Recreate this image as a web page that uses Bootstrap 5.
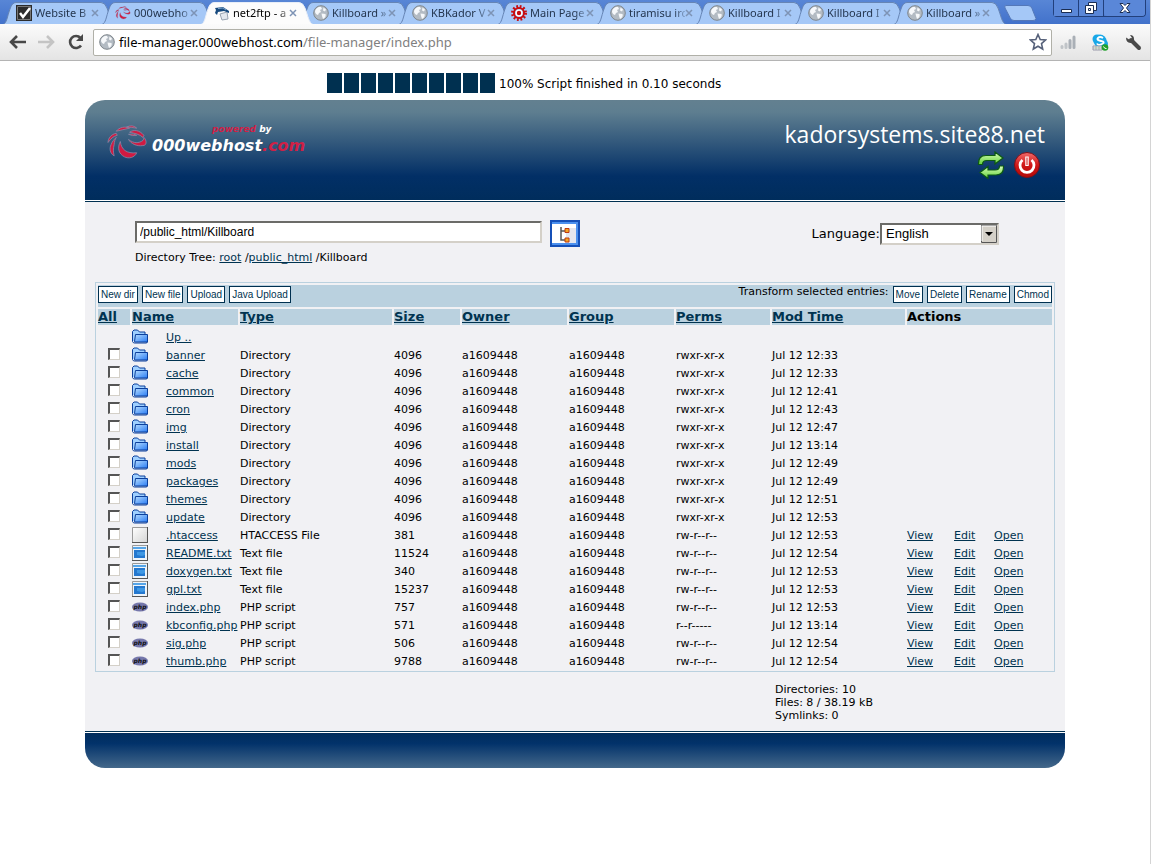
<!DOCTYPE html>
<html lang="en">
<head>
<meta charset="utf-8">
<title>net2ftp - a web based FTP client</title>
<meta name="viewport" content="width=device-width, initial-scale=1">
<link href="https://cdn.jsdelivr.net/npm/bootstrap@5.3.0/dist/css/bootstrap.min.css" rel="stylesheet">
<style>
:root { --navy: #003050; --sky: #bad1df; }
body { font-family: "DejaVu Sans", Verdana, sans-serif; font-size: 11px; line-height: 14px; color: #000; background: #fff; }
.window-frame { min-height: 100vh; margin-right: 1px; border-right: 1px solid #d4d4d4; }
a { color: #003350; text-decoration: underline; }

/* browser window */
.tab-strip { height: 24px; background: linear-gradient(#5886d6, #4272cb); padding-left: 3px; overflow: hidden; }
.tab-list { min-width: 0; }
.tab-item { position: relative; flex: 0 1 112px; min-width: 0; height: 22px; margin-top: 2px; margin-right: -13px; padding: 0 16px 0 13px; font: 11px/22px "Noto Sans", sans-serif; color: #24364f; background: none; border: 0; text-align: left; }
.tab-item.current { z-index: 2; color: #000; }
.tab-item > svg, .tab-item > span { position: relative; flex: none; }
.tab-item > .shape { position: absolute; inset: 0; width: 100%; height: 100%; fill: #a5c8f7; stroke: #6685b5; }
.tab-item.current > .shape { fill: #fcfcfc; stroke: #e8eef8; }
.tab-item .tab-icon { margin-right: 3px; }
.tab-item .caption { flex: 1 1 0; min-width: 0; overflow: hidden; white-space: nowrap; -webkit-mask-image: linear-gradient(90deg, #000 80%, #0004); mask-image: linear-gradient(90deg, #000 80%, #0004); }
.new-tab { width: 34px; height: 16px; margin: 5px 0 0 10px; padding: 0; border: 0; background: none; }
.win-buttons { margin-right: 4px; height: 17px; border: 1px solid #22407c; border-top: 0; border-radius: 0 0 4px 4px; }
.win-buttons button { width: 25px; padding: 0; border: 0; border-right: 1px solid #22407c; background: #5a87d8; line-height: 0; }
.win-buttons button:last-child { width: 41px; border-right: 0; border-radius: 0 0 3px 3px; }
.tool-bar { height: 37px; background: linear-gradient(#fbfbfb, #e4e4e4); border-bottom: 1px solid #b4b4b4; padding: 0 8px 0 9px; }
.tool-bar button { padding: 0; border: 0; background: none; line-height: 0; }
.address { height: 27px; border: 1px solid #b0b0a8; border-radius: 2px; background: #fff; font: 13px/25px "Noto Sans", sans-serif; color: #808080; padding: 0 4px 0 5px; }
.address b { font-weight: 400; color: #000; }

/* progress */
.progress-line { height: 39px; padding: 12px 0 0 327px; font-size: 12px; line-height: 22px; }
.progress-line i { width: 15px; height: 20px; background: var(--navy); }
.blocks { gap: 2px; }

/* panel */
.panel { max-width: 980px; margin: 0 auto; }
.panel-head { height: 100px; border-radius: 20px 20px 0 0; background: linear-gradient(#638090 0, #5e7e90 12%, #022f66 76%, #002d5c 100%); padding: 21px 20px 0 22px; }
.logo-text { font: italic bold 16px/16px "DejaVu Sans", sans-serif; color: #fff; }
.logo-text small { display: block; font-size: 9px; line-height: 9px; padding-left: 60px; }
.logo-text em { color: #d02045; }
.site-name { font: 23px/26px "Open Sans", sans-serif; color: #fff; }
.panel-main { background: #f1f1f4; border-top: 1px solid var(--navy); border-bottom: 1px solid var(--navy); margin: 1px 0; padding: 18px 10px 9px; }
.panel-foot { height: 35px; border-radius: 0 0 20px 20px; background: linear-gradient(#002d5c, #02326a 30%, #44688a); }
.sunk { border: 2px solid; border-color: #6b6b68 #d4d0c8 #d4d0c8 #6b6b68; border-radius: 0; background: #fff; font: 12px/18px "Liberation Sans", Arial, sans-serif; color: #000; }
.path-row { padding: 0 56px 0 40px; }
.path-box { width: 407px; height: 22px; padding: 0 3px; }
.lang-label { font-size: 13px; line-height: 18px; }
.lang-box { width: 119px; height: 22px; padding: 0 0 0 4px; font-size: 13px; appearance: none; background: #fff; }
.lang-wrap { position: relative; }
.lang-wrap svg { position: absolute; right: 2px; top: 2px; pointer-events: none; }
.crumbs { padding: 4px 40px 0; height: 35px; }

.file-table { width: 100%; table-layout: fixed; border-collapse: separate; border-spacing: 2px; border: 1px solid var(--sky); }
.file-table td, .file-table th { padding: 0; height: 16px; line-height: 16px; white-space: nowrap; vertical-align: top; }
.file-table th { background: var(--sky); font-size: 13px; }
.file-table tbody td:nth-child(n+3) { padding-top: 2px; line-height: 14px; vertical-align: bottom; }
.file-table .up-row td { height: 18px; padding-top: 2px; }
.file-table .commands { height: 22px; background: var(--sky); line-height: 14px; }
.file-table svg { display: block; }
.php-icon { margin-top: 3px; }
.c-all { width: 32px; } .c-icon { width: 32px; } .c-name { width: 72px; } .c-type { width: 152px; } .c-size { width: 66px; }
.c-own { width: 105px; } .c-perm { width: 94px; } .c-time { width: 133px; } .c-view { width: 45px; } .c-edit { width: 38px; }
.cmd { height: 17px; margin: 1px 0 0; padding: 0 2px; border: 1px solid var(--navy); border-radius: 0; background: #fff; color: #003350; font: 10px/15px "Liberation Sans", Arial, sans-serif; white-space: nowrap; }
.tick { display: block; appearance: none; width: 12px; height: 12px; margin: 1px 0 0 10px; background: #fff; border: solid; border-width: 2px 1px 1px 2px; border-color: #555 #d4d0c8 #d4d0c8 #555; }
.totals { padding: 11px 0 0 680px; line-height: 13px; }
</style>
</head>
<body>
<svg width="0" height="0" class="position-absolute" aria-hidden="true">
  <defs>
    <linearGradient id="blue" x1="0" y1="0" x2="1" y2="1"><stop offset="0" stop-color="#b4dcff"/><stop offset="1" stop-color="#2a7cf4"/></linearGradient>
    <linearGradient id="paper" x1="0" y1="0" x2="1" y2="1"><stop offset="0" stop-color="#fff"/><stop offset="1" stop-color="#d4d4d4"/></linearGradient>
    <linearGradient id="red" x1="0" y1="0" x2="0" y2="1"><stop offset="0" stop-color="#f26a6a"/><stop offset=".5" stop-color="#d01818"/><stop offset="1" stop-color="#b40808"/></linearGradient>
    <linearGradient id="leaf" x1="0" y1="0" x2="0" y2="1"><stop offset="0" stop-color="#d8ffb8"/><stop offset="1" stop-color="#63cf3a"/></linearGradient>
  </defs>
  <symbol id="i-shape" viewBox="0 0 112 22" preserveAspectRatio="none"><path d="M0 22.500C4 21 4 15 7 7Q9 .5 13 .5H98Q102 .5 104 6C107 14 108 21 112 22.500"/></symbol>
  <symbol id="i-x" viewBox="0 0 8 8"><path d="M1 1l6 6M7 1L1 7" stroke="#7d93b5" stroke-width="1.500"/></symbol>
  <symbol id="i-globe" viewBox="0 0 16 16"><circle cx="8" cy="8" r="7.300" fill="#b3bbc3" stroke="#7f868c"/><path d="M3 4q3-3 5-2l1 2-2 1 1 2-2 1-1 2q-3-1-3-4zM8.500 8.500l4 .5q1 3-2.500 5l-1-3zM10.500 2.500l2.500 2-1 2-2-1z" fill="#f6f8fa"/></symbol>
  <symbol id="i-check" viewBox="0 0 16 16"><path d="M0 0h16v16H0z" fill="#2c2c2c"/><path d="M1.500 1.500h13v13h-13z" fill="none" stroke="#777"/><path d="M4 8l3 4 7-9" fill="none" stroke="#fff" stroke-width="2.500"/></symbol>
  <symbol id="i-swirl" viewBox="0 0 40 34"><g fill="#d01a42" stroke="#8c8fae" stroke-width=".7"><path d="M21 14c5 4 10 4 14 1q1-1 1-3c3 3 3 8-1 8-6 1-12-2-14-6z"/><path d="M13 16c1 8 6 12 16 11-2 5-8 6-12 4-6-3-7-9-4-15z"/><path d="M22 7c4-3 10-2 14 3l-1 2c-3-3-8-4-13-5z"/><path d="M4 19c-2 4-1 9 3 11-1-4-1-7 0-11 0-3 1-5 2-7-2 2-4 4-5 7z"/><path d="M9 8C4 9 1 13 1 17c3-4 5-6 9-7z"/><path d="M9 6c3-4 9-5 13-3-4 1-9 2-13 3z"/><path d="M19 2q6-3 10 1-5-1-10-1z"/><path d="M21 9q5-1 8 1-4 1-8-1z"/></g></symbol>
  <symbol id="i-ftp" viewBox="0 0 16 16"><path d="M6 9l7-2 1 7-6 1z" stroke="#9aa5b2" fill="#e3e8ee"/><path d="M1 3l8-1 6 4v2l-5-2-6 1-1 3-2-2 1-3z" fill="#174a7e"/><path d="M4 3.500l5-.5 3 2" stroke="#7fa6cc" fill="none"/></symbol>
  <symbol id="i-gear" viewBox="0 0 16 16"><circle cx="8" cy="8" r="6.500" fill="none" stroke="#c80d10" stroke-width="3" stroke-dasharray="1.700 1.700"/><circle cx="8" cy="8" r="5" fill="none" stroke="#c80d10" stroke-width="2"/><circle cx="8" cy="8" r="3.500" fill="#fff"/><circle cx="8" cy="8" r="2.200" fill="#c80d10"/></symbol>
  <symbol id="i-folder" viewBox="0 0 17 15"><path d="M.5 12.500V2.500l1.500-1.500h3.500l2 2h5.500v3" fill="#9fd0ff" stroke="#0b3f9c"/><path d="M2.500 12.500l1-7h12v7.500h-13z" fill="url(#blue)" stroke="#0b3f9c"/><path d="M.5 12.500q.5 1.500 2 1.500H14q1.500 0 1.500-1.500" fill="none" stroke="#0b3f9c"/></symbol>
  <symbol id="i-file" viewBox="0 0 16 16"><path d="M.5.5h15v15H.5z" fill="url(#paper)" stroke="#9a9a9a"/><path d="M0 15.500h16M15.500 0v16" stroke="#555"/></symbol>
  <symbol id="i-text" viewBox="0 0 16 16"><path d="M.5.5h15v15H.5z" fill="#eef4fa" stroke="#999"/><path d="M0 15.500h16M15.500 0v16" stroke="#555"/><path d="M1 2h13v2H1z" fill="#56a5e8"/><path d="M2 5h11v8H2z" fill="#2478cf"/><path d="M5 7h8v3l-3 1-5-1z" fill="#3f98e4"/></symbol>
  <symbol id="i-php" viewBox="0 0 16 10"><ellipse cx="8" cy="5" rx="8" ry="4.600" fill="#7577ab"/></symbol>
</svg>

<div class="window-frame">
  <header>
    <div class="tab-strip d-flex align-items-start">
      <div class="tab-list d-flex flex-grow-1" id="tabs"></div>
      <div class="win-buttons d-flex flex-shrink-0">
        <button type="button" aria-label="Minimize"><svg width="14" height="14"><path d="M2.500 8.500h10v3h-10z" fill="#fff" stroke="#1b2d52"/></svg></button>
        <button type="button" aria-label="Restore"><svg width="14" height="14" fill="#fff" stroke="#1b2d52"><path d="M4.500 1.500h8v8h-8z"/><path d="M1.500 4.500h8v8h-8z"/><path d="M4.500 7.500h2v2h-2z"/></svg></button>
        <button type="button" aria-label="Close window"><svg width="14" height="14"><path d="M2 2.500h3l2 2 2-2h3L8.500 7l3.500 4.500H9l-2-2-2 2H2L5.500 7z" fill="#fff" stroke="#1b2d52"/></svg></button>
      </div>
    </div>
    <div class="tool-bar d-flex align-items-center">
      <button type="button" aria-label="Back"><svg width="17" height="16" fill="none" stroke="#484848" stroke-width="2.600"><path d="M8 2L2 8l6 6M2 8h15"/></svg></button>
      <button type="button" aria-label="Forward" class="ms-2 ps-1"><svg width="17" height="16" fill="none" stroke="#c4c4c4" stroke-width="2.600"><path d="M9 2l6 6-6 6M15 8H0"/></svg></button>
      <button type="button" aria-label="Reload" class="ms-2 ps-1"><svg width="18" height="16"><path d="M14 11.500A6 6 0 1 1 13.500 4" fill="none" stroke="#484848" stroke-width="2.600"/><path d="M16 0v7H9z" fill="#484848"/></svg></button>
      <div class="address d-flex align-items-center flex-grow-1 ms-2">
        <svg width="16" height="16" class="me-1"><use href="#i-globe"/></svg>
        <span class="flex-grow-1"><b>file-manager.000webhost.com</b>/file-manager/index.php</span>
        <svg width="18" height="18" viewBox="0 0 18 18"><path d="M9 1.500l2.200 5 5.300.5-4 3.600 1.200 5.400L9 13.200 4.300 16l1.200-5.400-4-3.600 5.300-.5z" fill="#fff" stroke="#56617a" stroke-width="1.600"/></svg>
      </div>
      <svg width="16" height="16" class="ms-2 me-3" viewBox="0 0 16 16" stroke-linecap="round" stroke-width="3"><path d="M2 12.500v1M6 10v3.500" stroke="#c0c4c8"/><path d="M10 6.500v7M14 3v10.500" stroke="#a9afb6"/></svg>
      <svg width="17" height="17" class="me-3" viewBox="0 0 17 17"><circle cx="5" cy="5" r="4.500" fill="#18a8e8"/><circle cx="11" cy="10" r="5" fill="#18a8e8"/><circle cx="8" cy="7" r="6.500" fill="#18a8e8"/><path d="M11 4Q8 2 6 4T9 7 10 10 5 9.500" fill="none" stroke="#fff" stroke-width="1.800"/><path d="M1 12h9v4H1z" fill="#eef0ee" stroke="#99a"/><path d="M4 12v4M7 12v4M1 14h9" stroke="#9a9" stroke-width=".7"/><circle cx="13" cy="13.500" r="3.300" fill="#21a12c"/><path d="M11.500 12.500q1 2.500 3 2" stroke="#fff" fill="none"/></svg>
      <svg width="17" height="17" viewBox="0 0 17 17"><path d="M6 6l8 8" stroke="#4a4a4a" stroke-width="4" stroke-linecap="round"/><path d="M1 3.500q0 5 4.500 5.500T9 5Q9 1 5 1l2 3-2 2z" fill="#4a4a4a"/></svg>
    </div>
  </header>

  <main>
    <div class="progress-line d-flex">
      <div class="blocks d-flex me-1" role="progressbar" aria-label="Script progress" aria-valuenow="100"><i></i><i></i><i></i><i></i><i></i><i></i><i></i><i></i><i></i><i></i></div>
      <span>100% Script finished in 0.10 seconds</span>
    </div>
    <div class="panel">
      <div class="panel-head d-flex justify-content-between">
        <a href="#" class="d-flex align-items-start text-decoration-none">
          <svg width="41" height="35" class="mt-1"><use href="#i-swirl"/></svg>
          <span class="logo-text ms-1 pt-1"><small><em>powered</em> by</small><span class="d-block pt-1">000webhost<em>.com</em></span></span>
        </a>
        <div class="text-end">
          <div class="site-name">kadorsystems.site88.net</div>
          <div class="d-flex justify-content-end mt-1 pe-1 gap-2">
            <a href="#" aria-label="Refresh"><svg width="28" height="28" viewBox="0 0 28 28" fill="url(#leaf)" stroke="#0d5a12" stroke-width="1.200"><path d="M1.500 13.500Q1 4.500 9 4.500h9V1l8 6-8 6V9.500h-8q-4.500 0-4.500 4z"/><path d="M26.500 15Q27 24 19 24h-8v3.500l-8-6 8-6V19h7q4.500 0 4.500-4z"/></svg></a>
            <a href="#" aria-label="Log out"><svg width="28" height="28" viewBox="0 0 28 28"><circle cx="14" cy="14" r="12.500" fill="url(#red)" stroke="#7c0f18"/><path d="M9.500 9a7 7 0 1 0 9 0" fill="none" stroke="#fff" stroke-width="2.800"/><path d="M14 5.500v9.500" stroke="#fff" stroke-width="3.500"/><path d="M14 6.500v7.500" stroke="#d01818"/></svg></a>
          </div>
        </div>
      </div>
      <div class="panel-main">
        <div class="path-row d-flex align-items-center">
          <input type="text" class="sunk path-box mb-1" aria-label="Directory" value="/public_html/Killboard">
          <button type="button" class="border-0 bg-transparent p-0 ms-2" aria-label="Browse"><svg width="30" height="27" class="d-block"><path d="M1 1h28v25H1z" fill="#fff" stroke="#1550b8" stroke-width="2"/><path d="M2 2h26v2H2zM2 23h26v2H2zM26 2h2v22h-2z" fill="#4b90ee"/><path d="M16 8h10v15H16z" fill="#e4e6ee"/><path d="M11 7v13h5M11 11h5" fill="none" stroke="#555" stroke-width="1.500"/><path d="M15 8.500h4v4h-4zM15 18h4v4h-4z" fill="#f5a623" stroke="#c03a10"/></svg></button>
          <label for="lang" class="lang-label ms-auto">Language:</label>
          <span class="lang-wrap"><select id="lang" class="sunk lang-box"><option>English</option></select><svg width="16" height="18"><path d="M.5.5h15v17H.5z" fill="#d4d0c8" stroke="#555"/><path d="M1 16V1h14" fill="none" stroke="#fff"/><path d="M4 7h8l-4 4z"/></svg></span>
        </div>
        <nav class="crumbs" aria-label="Directory tree">Directory Tree: <a href="#">root</a> /<a href="#">public_html</a> /Killboard</nav>
        <table class="file-table">
          <colgroup><col class="c-all"><col class="c-icon"><col class="c-name"><col class="c-type"><col class="c-size"><col class="c-own"><col class="c-own"><col class="c-perm"><col class="c-time"><col class="c-view"><col class="c-edit"><col></colgroup>
          <thead>
            <tr><td colspan="12" class="commands"><div class="d-flex gap-1">
              <button type="button" class="cmd">New dir</button><button type="button" class="cmd">New file</button><button type="button" class="cmd">Upload</button><button type="button" class="cmd">Java Upload</button>
              <span class="ms-auto">Transform selected entries:</span>
              <button type="button" class="cmd">Move</button><button type="button" class="cmd">Delete</button><button type="button" class="cmd">Rename</button><button type="button" class="cmd">Chmod</button>
            </div></td></tr>
            <tr><th><a href="#">All</a></th><th colspan="2"><a href="#">Name</a></th><th><a href="#">Type</a></th><th><a href="#">Size</a></th><th><a href="#">Owner</a></th><th><a href="#">Group</a></th><th><a href="#">Perms</a></th><th><a href="#">Mod Time</a></th><th colspan="3">Actions</th></tr>
          </thead>
          <tbody id="files">
            <tr class="up-row"><td></td><td><svg width="17" height="15"><use href="#i-folder"/></svg></td><td colspan="10"><a href="#">Up ..</a></td></tr>
          </tbody>
        </table>
        <div class="totals">Directories: 10<br>Files: 8 / 38.19 kB<br>Symlinks: 0</div>
      </div>
      <div class="panel-foot"></div>
    </div>
  </main>
</div>

<script src="https://cdn.jsdelivr.net/npm/bootstrap@5.3.0/dist/js/bootstrap.bundle.min.js"></script>
<script>
const tabs = [["check", "Website B"], ["swirl", "000webho"], ["ftp", "net2ftp - a"], ["globe", "Killboard »"], ["globe", "KBKador V"], ["gear", "Main Page"], ["globe", "tiramisu irc"], ["globe", "Killboard I"], ["globe", "Killboard I"], ["globe", "Killboard »"]];
document.getElementById("tabs").innerHTML = tabs.map(([icon, title], i) => `
  <button type="button" class="tab-item d-flex align-items-center${i === 2 ? " current" : ""}">
    <svg class="shape"><use href="#i-shape"/></svg>
    <svg width="16" height="16" class="tab-icon"><use href="#i-${icon}"/></svg>
    <span class="caption">${title}</span>
    <svg width="8" height="8"><use href="#i-x"/></svg>
  </button>`).join("") +
  `<button type="button" class="new-tab flex-shrink-0" aria-label="New tab"><svg class="d-block" width="34" height="16"><path d="M3 .5h22q3 0 4 3l4 10q0 2-3 2H11q-3 0-4-3L2 3Q1 .5 3 .5z" fill="#a5c8f7" stroke="#5478b8"/></svg></button>`;

const dirs = [["banner", "12:33"], ["cache", "12:33"], ["common", "12:41"], ["cron", "12:43"], ["img", "12:47"], ["install", "13:14"], ["mods", "12:49"], ["packages", "12:49"], ["themes", "12:51"], ["update", "12:53"]];
const files = [
  [".htaccess", "file", "HTACCESS File", 381, "12:53"], ["README.txt", "text", "Text file", 11524, "12:54"],
  ["doxygen.txt", "text", "Text file", 340, "12:53"], ["gpl.txt", "text", "Text file", 15237, "12:53"],
  ["index.php", "php", "PHP script", 757, "12:53"], ["kbconfig.php", "php", "PHP script", 571, "13:14"],
  ["sig.php", "php", "PHP script", 506, "12:54"], ["thumb.php", "php", "PHP script", 9788, "12:54"]];
const icons = { folder: [17, 15], file: [16, 16], text: [16, 16], php: [16, 10] };
const phpText = `<text x="8" y="7" text-anchor="middle" font-family="DejaVu Sans" font-size="6" font-style="italic" font-weight="bold" fill="#111">php</text>`;
const row = (name, icon, type, size, perms, time, actions) => `<tr>
  <td><input type="checkbox" class="tick" aria-label="${name}"></td>
  <td><svg class="${icon}-icon" width="${icons[icon][0]}" height="${icons[icon][1]}"><use href="#i-${icon}"/>${icon === "php" ? phpText : ""}</svg></td>
  <td><a href="#">${name}</a></td><td>${type}</td><td>${size}</td><td>a1609448</td><td>a1609448</td><td>${perms}</td><td>Jul 12 ${time}</td>
  ${actions.map(a => `<td>${a && `<a href="#">${a}</a>`}</td>`).join("")}</tr>`;
document.getElementById("files").insertAdjacentHTML("beforeend",
  dirs.map(([n, t]) => row(n, "folder", "Directory", 4096, "rwxr-xr-x", t, ["", "", ""])).join("") +
  files.map(([n, i, k, s, t]) => row(n, i, k, s, n === "kbconfig.php" ? "r--r-----" : "rw-r--r--", t, ["View", "Edit", "Open"])).join(""));
</script>
</body>
</html>
